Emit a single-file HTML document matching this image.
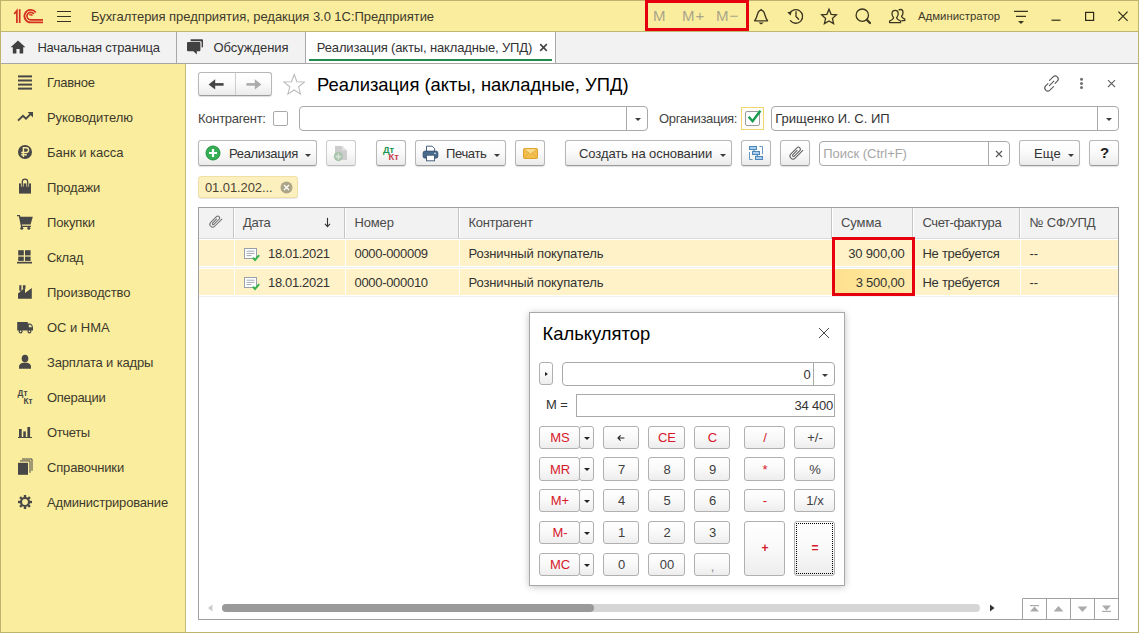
<!DOCTYPE html>
<html lang="ru">
<head>
<meta charset="utf-8">
<title>1С:Предприятие</title>
<style>
*{box-sizing:border-box;margin:0;padding:0}
html,body{width:1139px;height:633px;overflow:hidden;background:#fff}
body{font-family:"Liberation Sans",sans-serif;font-size:13px;color:#333;position:relative}
.abs{position:absolute}
.t{position:absolute;white-space:nowrap;line-height:1}
#frame{position:absolute;left:0;top:0;width:1139px;height:633px;background:#FBED9E}
#topbar{position:absolute;left:0;top:0;width:1139px;height:32px;background:#FBED9E;border-top:1px solid #BDB36A;border-bottom:1px solid #C0B772}
#tabbar{position:absolute;left:0;top:32px;width:1138px;height:32px;background:#F2F2F2;border-bottom:1px solid #A6A6A6}
#sidebar{position:absolute;left:0;top:64px;width:186px;height:568px;background:#FBED9E;border-right:1px solid #C2B873}
#content{position:absolute;left:186px;top:64px;width:952px;height:568px;background:#fff}
.edgeL{position:absolute;left:0;top:0;width:1px;height:633px;background:#BDB36A}
.edgeR{position:absolute;left:1138px;top:0;width:1px;height:633px;background:#BDB36A}
.edgeB{position:absolute;left:0;top:632px;width:1139px;height:1px;background:#BDB36A}
/* tabs */
.tab{position:absolute;top:0;height:31px;border-right:1px solid #A8A8A8}
.tab .t{top:9px;font-size:13px;color:#333}
/* sidebar */
.sitem{position:absolute;left:47px;font-size:13px;color:#3d3a2c;white-space:nowrap;line-height:1;margin-top:1px}
.sicon{position:absolute;left:17px;width:16px;height:16px}
/* buttons */
.btn{position:absolute;height:26px;border:1px solid #B7B7B7;border-bottom-color:#9C9C9C;border-radius:3px;background:linear-gradient(#ffffff 0%,#fbfbfb 45%,#ebebeb 100%);box-shadow:0 1px 1px rgba(0,0,0,.13)}
.btn .t{top:6px;font-size:13px;color:#333}
.arr{position:absolute;width:0;height:0;margin-left:.5px;margin-top:.5px;border-left:3px solid transparent;border-right:3px solid transparent;border-top:3.4px solid #3c3c3c}
.inp{position:absolute;border:1px solid #A9A9A9;border-radius:4px;background:#fff}
.inp .div{position:absolute;top:0;bottom:0;width:1px;background:#A9A9A9}
/* table */
#tbl{position:absolute;left:198px;top:207px;width:921px;height:413px;border:1px solid #A0A0A0;background:#fff}
.th{position:absolute;top:0;height:31px;background:#F2F2F2}
.hsep{position:absolute;top:0;width:2px;height:31px;background:#fff;border-left:1px solid #C4C4C4}
.row{position:absolute;left:0;width:919px;height:26px;background:#FFF2C8}
.csep{position:absolute;top:0;width:1px;height:26px;background:#fff}
.cell{position:absolute;top:7px;font-size:13px;color:#333;white-space:nowrap;line-height:1}
/* calculator */
#calc{position:absolute;left:529px;top:312px;width:316px;height:274px;background:#fff;border:1px solid #A8A8A8;box-shadow:0 1px 7px rgba(0,0,0,.24)}
.cb{position:absolute;height:23px;border:1px solid #B0B0B0;border-radius:3px;background:linear-gradient(#ffffff 0%,#f9f9f9 50%,#ededed 100%);text-align:center;font-size:13px;line-height:21px;color:#404040;padding-left:1px}
.cb.r{color:#D6182A}
</style>
</head>
<body>
<div id="frame"></div>
<div id="topbar">
<svg class="abs" style="left:0;top:-1px" width="1139" height="32" viewBox="0 0 1139 32" fill="none">
<!-- 1C logo -->
<g stroke="#D3301F" stroke-width="1.7" fill="none" stroke-linejoin="miter">
<path d="M14.2 14L16.9 10.6L16.9 23"/>
<path d="M19.7 9.2L19.7 23"/>
<path d="M35.8 12.4A6.3 6.3 0 1 0 30.8 22.4L43 22.4"/>
<path d="M33.8 13.9A3.8 3.8 0 1 0 30.8 19.9L43 19.9"/>
<path d="M32.3 15.7A1.6 1.6 0 0 0 29.4 15.4" stroke-width="1.3"/>
</g>
<!-- hamburger -->
<g stroke="#3a3520" stroke-width="1.1">
<path d="M57 11.5H71M57 16.5H71M57 21.5H71"/>
</g>
<!-- bell -->
<g stroke="#3a3520" stroke-width="1.3" stroke-linejoin="round" stroke-linecap="round">
<path d="M754.6 20.8 H767.6 C764.6 18 765.6 12.4 762.6 10.6 Q761.1 9.6 759.6 10.6 C756.6 12.4 757.6 18 754.6 20.8 Z"/>
<path d="M761.1 9.4V10"/>
</g>
<path d="M758.3 22.6H763.9L761.1 24.6Z" fill="#3a3520"/>
<!-- history -->
<g stroke="#3a3520" stroke-width="1.3" stroke-linecap="round">
<path d="M789.6 13.6 A6.8 6.8 0 1 1 790.4 20.6"/>
<path d="M796 11.6V16.4L798.6 19.2"/>
</g>
<path d="M787.2 12.2L791.6 11.4L790.6 15.6Z" fill="#3a3520"/>
<!-- star -->
<path d="M829 9.3L831.1 14.3L836.4 14.8L832.4 18.4L833.6 23.6L829 20.9L824.4 23.6L825.6 18.4L821.6 14.8L826.9 14.3Z" stroke="#3a3520" stroke-width="1.3" stroke-linejoin="miter"/>
<!-- search -->
<circle cx="862.3" cy="15.2" r="6.2" stroke="#3a3520" stroke-width="1.3"/>
<path d="M866.8 19.8L870 23" stroke="#3a3520" stroke-width="2.2" stroke-linecap="round"/>
<!-- users -->
<g stroke="#3a3520" stroke-width="1.3" stroke-linejoin="round">
<path d="M898.6 10.4 Q899.4 9.4 900.6 9.4 Q903 9.6 903 12.6 Q903 15 901.6 16.2 Q901.4 17.6 904.8 19.2 V20.6 H901.4"/>
<path d="M889.6 22.6 V21 Q893.6 19.4 893.6 17.6 Q892 16.2 892 13.6 Q892 10.4 895.1 10.4 Q898.2 10.4 898.2 13.6 Q898.2 16.2 896.6 17.6 Q896.6 19.4 900.6 21 V22.6 Z"/>
</g>
<!-- menu lines -->
<g stroke="#3a3520" stroke-width="1.2"><path d="M1014 11.4H1028M1016 16.4H1026"/></g>
<path d="M1018 21H1024L1021 24Z" fill="#3a3520"/>
<!-- window controls -->
<g stroke="#2e2a18" stroke-width="1.2"><path d="M1051.5 20.2H1060.5"/><rect x="1085.6" y="12.4" width="8" height="8"/><path d="M1118.4 11.6L1127.6 20.8M1127.6 11.6L1118.4 20.8"/></g>
</svg>
<div class="t" style="left:91px;top:9px;font-size:13px;color:#3d3a2c;letter-spacing:-0.05px">Бухгалтерия предприятия, редакция 3.0 1С:Предприятие</div>
<div class="t" style="left:653px;top:7px;font-size:15px;color:#A9A58A">M</div>
<div class="t" style="left:682px;top:7px;font-size:15px;color:#A9A58A;letter-spacing:1px">M+</div>
<div class="t" style="left:716px;top:7px;font-size:15px;color:#A9A58A;letter-spacing:1px">M−</div>
<div class="abs" style="left:645px;top:-1px;width:104px;height:31px;border:3px solid #E6000E"></div>
<div class="t" style="left:918px;top:10px;font-size:11.4px;color:#3d3a2c">Администратор</div>
</div>
<div id="tabbar">
<div class="tab" style="left:0;width:177px">
<svg class="abs" style="left:10px;top:8px" width="16" height="14" viewBox="0 0 16 14"><path d="M8 0.6L0.6 7.2H2.8V13.4H6.4V9H9.6V13.4H13.2V7.2H15.4Z" fill="#3f3f3f"/></svg>
<div class="t" style="letter-spacing:-0.19px;left:37.4px">Начальная страница</div></div>
<div class="tab" style="left:177px;width:129px">
<svg class="abs" style="left:8px;top:5px" width="20" height="20" viewBox="185 37 20 20"><path d="M190.6 39.2H202Q203 39.2 203 40.2V46.8Q203 47.6 202 47.6H201.6V42.4Q201.6 41.2 200.4 41.2H190.6Z" fill="#414141"/><path d="M188 42H199.4Q200.4 42 200.4 43V50.2Q200.4 51.2 199.4 51.2H196.8V54.6L193.4 51.2H188Q187 51.2 187 50.2V43Q187 42 188 42Z" fill="#414141"/></svg>
<div class="t" style="letter-spacing:-0.05px;left:36.5px">Обсуждения</div></div>
<div class="tab" style="left:306px;width:250px;background:#fff;height:31px">
<div class="t" style="left:10.8px;color:#333;letter-spacing:-0.15px">Реализация (акты, накладные, УПД)</div>
<svg class="abs" style="left:233px;top:11px" width="9" height="9" viewBox="0 0 9 9"><path d="M1.2 1.2L7.8 7.8M7.8 1.2L1.2 7.8" stroke="#484848" stroke-width="1.7"/></svg>
<div class="abs" style="left:3px;top:27px;width:243px;height:2px;background:#1F8B4D"></div>
</div>
</div>
<div id="sidebar"><svg class="abs" style="left:0;top:0" width="186" height="567" viewBox="0 64 186 567">
<g fill="#474747">
<rect x="18" y="75.4" width="14" height="2"/><rect x="18" y="79.5" width="14" height="2"/><rect x="18" y="83.6" width="14" height="2"/><rect x="18" y="87.6" width="14" height="2"/>
</g>
<path d="M18 120.6L23 115.8L26 118.6L31 113.6" fill="none" stroke="#474747" stroke-width="1.9" stroke-linejoin="miter"/>
<path d="M27.6 112H33V117.4Z" fill="#474747"/>
<circle cx="25" cy="152" r="7" fill="#474747"/>
<g stroke="#FBED9E" stroke-width="1.45" fill="none"><path d="M23.4 157V147.7H26.2A2.4 2.4 0 0 1 26.2 152.5H21.2"/><path d="M21.2 154.8H26.8"/></g>
<path d="M19 183.4H31V193.6H19Z" fill="#474747"/>
<path d="M22.3 186.6V181.8A2.7 2.7 0 0 1 27.7 181.8V186.6" fill="none" stroke="#FBED9E" stroke-width="2.7"/><path d="M22.3 186.4V181.8A2.7 2.7 0 0 1 27.7 181.8V186.4" fill="none" stroke="#474747" stroke-width="1.3"/><path d="M19 183.4H20.8M29.2 183.4H31" stroke="#474747" stroke-width="0.01"/>
<path d="M22.3 184V186M27.7 184V186" stroke="#FBED9E" stroke-width="0.01"/>
<path d="M19.4 216.8H32.8L30.6 224.4H21.2Z" fill="#474747"/>
<path d="M17 215.6H19.4L21.6 226.4H31" fill="none" stroke="#474747" stroke-width="1.3"/>
<circle cx="21.8" cy="228.2" r="1.5" fill="#474747"/><circle cx="28.8" cy="228.2" r="1.5" fill="#474747"/>
<g fill="#474747"><rect x="18.2" y="250.2" width="5.6" height="5.2"/><rect x="25" y="250.2" width="5.6" height="5.2"/><rect x="18.2" y="256.6" width="5.6" height="4.3"/><rect x="25" y="256.6" width="5.6" height="4.3"/><rect x="17" y="261.8" width="15" height="1.7"/></g>
<g fill="#474747"><path d="M18 298.8V293.6L25 287.6V293L31.8 288V298.8Z"/><rect x="19.3" y="285.2" width="2.1" height="5.6"/><rect x="22.9" y="285.2" width="2.6" height="3.6"/></g>
<g fill="#474747"><path d="M17.2 322H27.8V323.6H30.4Q33 324.6 33 327.6V330.6H17.2Z"/><circle cx="20.6" cy="331.4" r="2"/><circle cx="29.4" cy="331.4" r="2"/></g>
<path d="M28.8 324.8H30.2Q31.8 325.4 31.9 327.2H28.8Z" fill="#EFE8B0"/>
<circle cx="20.6" cy="331.4" r="0.8" fill="#FBED9E"/><circle cx="29.4" cy="331.4" r="0.8" fill="#FBED9E"/>
<g fill="#474747"><ellipse cx="25" cy="358.6" rx="3.3" ry="3.8"/><path d="M19 368.8V366.4Q19 363.8 23 362.8H27Q31 363.8 31 366.4V368.8Z"/></g>
<g font-family="Liberation Sans" font-weight="bold" fill="#474747" font-size="8.2"><text x="17.6" y="396.2">Дт</text><text x="23.6" y="404">Кт</text></g>
<g fill="#474747"><rect x="19" y="429" width="2.7" height="8"/><rect x="23.3" y="431.4" width="2.5" height="5.6"/><rect x="27.4" y="427" width="2.7" height="10"/><rect x="18" y="437" width="14" height="1"/></g>
<rect x="18" y="462.8" width="10" height="12" fill="#474747"/>
<path d="M20 460.9H30V472.8M22 459H32V470.8" fill="none" stroke="#474747" stroke-width="1"/>
<path d="M29.60 502.00L32.00 502.00" stroke="#474747" stroke-width="2.4"/><path d="M28.25 505.25L29.95 506.95" stroke="#474747" stroke-width="2.4"/><path d="M25.00 506.60L25.00 509.00" stroke="#474747" stroke-width="2.4"/><path d="M21.75 505.25L20.05 506.95" stroke="#474747" stroke-width="2.4"/><path d="M20.40 502.00L18.00 502.00" stroke="#474747" stroke-width="2.4"/><path d="M21.75 498.75L20.05 497.05" stroke="#474747" stroke-width="2.4"/><path d="M25.00 497.40L25.00 495.00" stroke="#474747" stroke-width="2.4"/><path d="M28.25 498.75L29.95 497.05" stroke="#474747" stroke-width="2.4"/><circle cx="25" cy="502" r="4" fill="none" stroke="#474747" stroke-width="2.2"/>
</svg><div class="sitem" style="letter-spacing:-0.3px;top:11px">Главное</div><div class="sitem" style="letter-spacing:-0.06px;top:46px">Руководителю</div><div class="sitem" style="letter-spacing:0px;top:81px">Банк и касса</div><div class="sitem" style="letter-spacing:-0.17px;top:116px">Продажи</div><div class="sitem" style="letter-spacing:-0.16px;top:151px">Покупки</div><div class="sitem" style="letter-spacing:-0.3px;top:186px">Склад</div><div class="sitem" style="letter-spacing:-0.12px;top:221px">Производство</div><div class="sitem" style="letter-spacing:-0.04px;top:256px">ОС и НМА</div><div class="sitem" style="letter-spacing:-0.16px;top:291px">Зарплата и кадры</div><div class="sitem" style="letter-spacing:-0.3px;top:326px">Операции</div><div class="sitem" style="letter-spacing:-0.35px;top:361px">Отчеты</div><div class="sitem" style="letter-spacing:-0.16px;top:396px">Справочники</div><div class="sitem" style="letter-spacing:-0.175px;top:431px">Администрирование</div></div>
<div id="content"><div class="abs" style="left:-186px;top:-64px;width:1139px;height:633px">
<!-- nav buttons -->
<div class="btn" style="left:198px;top:72px;width:74px;height:24px;border-radius:3px"></div>
<div class="abs" style="left:235px;top:73px;width:1px;height:22px;background:#CDCDCD"></div>
<svg class="abs" style="left:198px;top:72px" width="74" height="24" viewBox="0 0 74 24">
<path d="M14 12.4H25.6" stroke="#444" stroke-width="2.6"/><path d="M10.6 12.4L17.2 7.2V17.6Z" fill="#444"/>
<path d="M48.4 12.4H60" stroke="#ABABAB" stroke-width="2.6"/><path d="M63.4 12.4L56.8 7.2V17.6Z" fill="#ABABAB"/>
</svg>
<svg class="abs" style="left:283px;top:73.4px" width="22.4" height="22.4" viewBox="0 0 24 24"><path d="M12 1.6L14.9 9.3L23 9.7L16.7 14.8L18.8 22.6L12 18.2L5.2 22.6L7.3 14.8L1 9.7L9.1 9.3Z" fill="#fff" stroke="#B9B9B9" stroke-width="1.1" stroke-linejoin="miter"/></svg>
<div class="t" style="left:317px;top:76px;font-size:18.4px;color:#000">Реализация (акты, накладные, УПД)</div>
<!-- link, dots, close -->
<svg class="abs" style="left:1040px;top:72px" width="84" height="24" viewBox="1040 72 84 24" fill="none">
<g stroke="#5c5c5c" stroke-width="1.15" fill="none" stroke-linecap="round"><g transform="rotate(-45 1054.2 80.0)"><path d="M1050.6 77.0H1055.6A3 3 0 0 1 1055.6 83.0H1052.4"/></g><g transform="rotate(-45 1048.8 87.0)"><path d="M1052.4 90.0H1047.4A3 3 0 0 1 1047.4 84.0H1050.6"/></g><path d="M1049.4 85.6L1053.8 81.2"/></g>
<circle cx="1081.5" cy="79.2" r="1.5" fill="#6e6e6e"/><circle cx="1081.5" cy="83.4" r="1.5" fill="#6e6e6e"/><circle cx="1081.5" cy="87.6" r="1.5" fill="#6e6e6e"/>
<path d="M1108 80.2L1115 87M1115 80.2L1108 87" stroke="#606060" stroke-width="1.05"/>
</svg>
<!-- form row -->
<div class="t" style="left:198px;top:112px;font-size:13px;letter-spacing:-0.285px;color:#444">Контрагент:</div>
<div class="abs" style="left:273px;top:111px;width:15px;height:15px;border:1px solid #A9A9A9;border-radius:2px;background:#fff"></div>
<div class="inp" style="left:299px;top:106px;width:349px;height:25px"><div class="div" style="left:326px"></div><div class="arr" style="left:334px;top:10px"></div></div>
<div class="t" style="left:659px;top:112px;font-size:13px;letter-spacing:-0.33px;color:#444">Организация:</div>
<div class="abs" style="left:741px;top:107px;width:23px;height:23px;border:1px solid #EFD670;background:#FFFEF6"></div>
<div class="abs" style="left:745px;top:111px;width:15px;height:15px;border:1px solid #9C9C9C;border-radius:2px;background:#fff"></div>
<svg class="abs" style="left:744.6px;top:106px" width="20" height="20" viewBox="0 0 20 20"><path d="M3.6 10.8L7.6 15.2L15.4 4.8" fill="none" stroke="#169A4B" stroke-width="2.4" stroke-linejoin="miter"/></svg>
<div class="inp" style="left:771px;top:106px;width:348px;height:25px"><div class="div" style="left:325px"></div><div class="arr" style="left:333px;top:10px"></div>
<div class="t" style="left:3.3px;top:5px;font-size:13px;color:#333">Грищенко И. С. ИП</div></div>
<!-- toolbar -->
<div class="btn" style="left:198px;top:140px;width:119px;height:26px"><div class="t" style="left:30px;letter-spacing:-0.335px">Реализация</div><div class="arr" style="left:105px;top:12px"></div>
<svg class="abs" style="left:6px;top:4px" width="16" height="16" viewBox="0 0 16 16"><circle cx="8" cy="8" r="7" fill="#35AE55" stroke="#23913F" stroke-width="1"/><path d="M8 4V12M4 8H12" stroke="#fff" stroke-width="2.2"/></svg></div>
<div class="btn" style="left:326px;top:140px;width:30px;height:26px;border-color:#CDCDCD;border-bottom-color:#BDBDBD;box-shadow:0 1px 1px rgba(0,0,0,.07)">
<svg class="abs" style="left:5px;top:4px" width="18" height="18" viewBox="0 0 18 18"><path d="M3 1H10L15 5.5V15H3Z" fill="#CDCDCD"/><path d="M10 1V5.5H15" fill="#E2E2E2"/><circle cx="6.4" cy="11.6" r="4.6" fill="#A9C3AC"/><path d="M6.4 8.8V14.4M3.6 11.6H9.2" stroke="#D5E3D6" stroke-width="1.6"/></svg></div>
<div class="btn" style="left:376px;top:140px;width:30px;height:26px">
<svg class="abs" style="left:0;top:0" width="28" height="23" viewBox="0 0 28 23" font-family="Liberation Sans" font-weight="bold"><text x="6" y="11.8" font-size="9.2" fill="#1E9650">Дт</text><text x="11.6" y="19" font-size="9.4" fill="#C9414F">Кт</text></svg></div>
<div class="btn" style="left:415px;top:140px;width:91px;height:26px"><div class="t" style="left:30px;letter-spacing:-0.35px">Печать</div><div class="arr" style="left:77px;top:12px"></div>
<svg class="abs" style="left:6px;top:4px" width="17" height="17" viewBox="0 0 17 17"><path d="M4.5 1.2H10.2L12.6 3.6V7H4.5Z" fill="#fff" stroke="#49617C" stroke-width="1"/><rect x="1.2" y="6.2" width="14.6" height="6.8" rx="1.6" fill="#4A6A8C" stroke="#33506E" stroke-width="1"/><rect x="4.5" y="10.2" width="8" height="5.6" fill="#fff" stroke="#49617C" stroke-width="1"/><rect x="12" y="7.8" width="2" height="1" fill="#DDE8F3"/></svg></div>
<div class="btn" style="left:515px;top:140px;width:30px;height:26px">
<svg class="abs" style="left:7px;top:7px" width="15" height="11" viewBox="0 0 15 11"><rect x="0.5" y="0.5" width="14" height="10" rx="1" fill="#F3BE4E" stroke="#DDA22C"/><path d="M1 1L7.5 6.4L14 1" fill="#F9D98A" stroke="#E2A93A" stroke-width="0.9"/><path d="M1 10L5.6 5.4M14 10L9.4 5.4" stroke="#E2A93A" stroke-width="0.8"/></svg></div>
<div class="btn" style="left:565px;top:140px;width:167px;height:26px"><div class="t" style="left:13px;letter-spacing:-0.085px">Создать на основании</div><div class="arr" style="left:153px;top:12px"></div></div>
<div class="btn" style="left:741px;top:140px;width:30px;height:26px">
<svg class="abs" style="left:5px;top:3px" width="20" height="20" viewBox="747 144 20 20" fill="none"><path d="M759.4 146.5H762.5V154M749.5 152V159.5H752.6" stroke="#6A97BF" stroke-width="1"/><path d="M754 150V151.5M757.3 155V156.5" stroke="#4F86B8" stroke-width="1.2"/><rect x="749.5" y="146.5" width="7" height="3" fill="#A9CFF0" stroke="#4F86B8" stroke-width="1"/><rect x="752.5" y="151.5" width="7" height="3" fill="#A9CFF0" stroke="#4F86B8" stroke-width="1"/><rect x="755.5" y="156.5" width="7" height="3" fill="#A9CFF0" stroke="#4F86B8" stroke-width="1"/></svg></div>
<div class="btn" style="left:780px;top:140px;width:30px;height:26px">
<svg class="abs" style="left:7px;top:4px" width="16" height="16" viewBox="-8 -8 16 16" fill="none"><g transform="rotate(45)"><path d="M3 -6.6V4.2A3 3 0 0 1 -3 4.2V-4.4A2 2 0 0 1 1 -4.4V3.4A1 1 0 0 1 -1 3.4V-2.6" stroke="#5e5e5e" stroke-width="1.05" stroke-linecap="round"/></g></svg></div>
<div class="inp" style="left:819px;top:141px;width:191px;height:25px"><div class="div" style="left:168px"></div>
<div class="t" style="letter-spacing:-0.03px;left:3.3px;top:5px;font-size:13px;color:#A6A6A6">Поиск (Ctrl+F)</div>
<svg class="abs" style="left:175px;top:8px" width="8" height="8" viewBox="0 0 8 8"><path d="M1 1L7 7M7 1L1 7" stroke="#555" stroke-width="1.1"/></svg></div>
<div class="btn" style="left:1019px;top:140px;width:61px;height:26px"><div class="t" style="left:14px;font-size:13px;top:6px;letter-spacing:0.1px">Еще</div><div class="arr" style="left:47px;top:12px"></div></div>
<div class="btn" style="left:1089px;top:140px;width:30px;height:26px"><div class="t" style="left:10px;top:4px;font-size:15px;font-weight:bold;color:#222">?</div></div>
<!-- chip -->
<div class="abs" style="left:198px;top:176px;width:100px;height:22px;background:#FDF0BF;border:1px solid #F1E0A6;border-radius:3px;box-shadow:0 1px 1px rgba(0,0,0,.10)">
<div class="t" style="left:6px;top:4px;font-size:13px;color:#4a4332;letter-spacing:-0.105px">01.01.202...</div>
<svg class="abs" style="left:81px;top:4px" width="13" height="13" viewBox="0 0 13 13"><circle cx="6.5" cy="6.5" r="6" fill="#ACA587"/><path d="M4 4L9 9M9 4L4 9" stroke="#fff" stroke-width="1.3"/></svg></div>
<div id="tbl"><div class="th" style="left:0;width:919px"></div><div class="abs" style="left:0;top:30px;width:919px;height:1px;background:#DADADA"></div><div class="hsep" style="left:34px;height:30px"></div><div class="hsep" style="left:145px;height:30px"></div><div class="hsep" style="left:259px;height:30px"></div><div class="hsep" style="left:632px;height:30px"></div><div class="hsep" style="left:713px;height:30px"></div><div class="hsep" style="left:820px;height:30px"></div><svg class="abs" style="left:9px;top:6px" width="15" height="15" viewBox="-8 -8 16 16" fill="none"><g transform="rotate(45)"><path d="M3 -6.6V4.2A3 3 0 0 1 -3 4.2V-4.4A2 2 0 0 1 1 -4.4V3.4A1 1 0 0 1 -1 3.4V-2.6" stroke="#6b6b6b" stroke-width="1.05" stroke-linecap="round"/></g></svg><div class="cell" style="left:44px;top:8px;color:#4a4a4a;letter-spacing:-0.32px">Дата</div><div class="cell" style="left:155.5px;top:8px;color:#4a4a4a;letter-spacing:-0.16px">Номер</div><div class="cell" style="left:269.5px;top:8px;color:#4a4a4a;letter-spacing:-0.31px">Контрагент</div><div class="cell" style="left:642px;top:8px;color:#4a4a4a;letter-spacing:-0.09px">Сумма</div><div class="cell" style="left:723.5px;top:8px;color:#4a4a4a;letter-spacing:-0.42px">Счет-фактура</div><div class="cell" style="left:830.4000000000001px;top:8px;color:#4a4a4a;letter-spacing:-0.08px">№ СФ/УПД</div><svg class="abs" style="left:124px;top:9px" width="9" height="11" viewBox="0 0 9 11"><path d="M4.5 0.8V9" stroke="#333" stroke-width="1.1"/><path d="M2 6.8L4.5 9.6L7 6.8" fill="none" stroke="#333" stroke-width="1.1"/></svg><div class="row" style="top:32px"><div class="csep" style="left:35px"></div><div class="csep" style="left:146px"></div><div class="csep" style="left:260px"></div><div class="csep" style="left:633px"></div><div class="csep" style="left:714px"></div><div class="csep" style="left:821px"></div><svg class="abs" style="left:45px;top:7.6px" width="17" height="14" viewBox="0 0 17 14"><rect x="0.5" y="0.5" width="12" height="10" fill="#fff" stroke="#98A1AA"/><path d="M2.5 3.2H10.5M2.5 5.4H10.5M2.5 7.6H7.5" stroke="#A3ABB3" stroke-width="1"/><path d="M8.8 9.6L11 12L15.2 7.2" fill="none" stroke="#35B34E" stroke-width="1.9"/></svg><div class="cell" style="left:69px;letter-spacing:-0.34px">18.01.2021</div><div class="cell" style="left:155.5px;letter-spacing:-0.31px">0000-000009</div><div class="cell" style="left:269.5px;letter-spacing:-0.12px">Розничный покупатель</div><div class="cell" style="right:213.5px;letter-spacing:-0.18px">30 900,00</div><div class="cell" style="left:723.5px;letter-spacing:-0.265px">Не требуется</div><div class="cell" style="left:830.4000000000001px">--</div></div><div class="abs" style="left:0;top:59px;width:919px;height:1px;background:#EFEFEF"></div><div class="row" style="top:61px"><div class="csep" style="left:35px"></div><div class="csep" style="left:146px"></div><div class="csep" style="left:260px"></div><div class="csep" style="left:633px"></div><div class="csep" style="left:714px"></div><div class="csep" style="left:821px"></div><div class="abs" style="left:634px;top:0;width:80px;height:26px;background:linear-gradient(95deg,#FFE18E 0%,#FFE69B 55%,#FFEBB0 100%)"></div><svg class="abs" style="left:45px;top:7.6px" width="17" height="14" viewBox="0 0 17 14"><rect x="0.5" y="0.5" width="12" height="10" fill="#fff" stroke="#98A1AA"/><path d="M2.5 3.2H10.5M2.5 5.4H10.5M2.5 7.6H7.5" stroke="#A3ABB3" stroke-width="1"/><path d="M8.8 9.6L11 12L15.2 7.2" fill="none" stroke="#35B34E" stroke-width="1.9"/></svg><div class="cell" style="left:69px;letter-spacing:-0.34px">18.01.2021</div><div class="cell" style="left:155.5px;letter-spacing:-0.31px">0000-000010</div><div class="cell" style="left:269.5px;letter-spacing:-0.12px">Розничный покупатель</div><div class="cell" style="right:213.5px;letter-spacing:-0.22px">3 500,00</div><div class="cell" style="left:723.5px;letter-spacing:-0.265px">Не требуется</div><div class="cell" style="left:830.4000000000001px">--</div></div><div class="abs" style="left:0;top:88px;width:919px;height:1px;background:#EFEFEF"></div><div class="abs" style="left:633px;top:29px;width:83px;height:59px;border:3px solid #E6000E"></div><svg class="abs" style="left:0;top:388px" width="919" height="24" viewBox="199 596 919 24">
<path d="M212.4 604.6V611.4L208 608Z" fill="#C9C9C9"/>
<rect x="222" y="604" width="758" height="8" rx="4" fill="#D6D6D6"/>
<rect x="222" y="604" width="372" height="8" rx="4" fill="#9A9A9A"/>
<path d="M990 604.4V611.6L994.6 608Z" fill="#333"/>
<g fill="none" stroke="#A0A0A0" stroke-width="1"><path d="M1022.5 619.5V598.5H1118.5"/><path d="M1046.5 598.5V619.5M1070.5 598.5V619.5M1094.5 598.5V619.5"/></g>
<g fill="#ABABAB"><rect x="1030" y="605" width="9" height="1.2"/><path d="M1030 611.6H1039L1034.5 606.6Z"/>
<path d="M1053.6 611.4H1063.4L1058.5 606Z"/>
<path d="M1077.6 606.6H1087.4L1082.5 612Z"/>
<path d="M1102 605.4H1111L1106.5 610.4Z"/><rect x="1102" y="610.8" width="9" height="1.2"/></g>
</svg></div>
<div id="calc"><div class="t" style="left:12.5px;top:12px;font-size:18.4px;color:#000">Калькулятор</div><svg class="abs" style="left:288px;top:14px" width="12" height="12" viewBox="0 0 12 12"><path d="M1 1L11 11M11 1L1 11" stroke="#484848" stroke-width="1"/></svg><div class="cb" style="left:9px;top:49px;width:14px;height:23px"><div class="abs" style="left:5px;top:8.5px;width:0;height:0;border-top:2.5px solid transparent;border-bottom:2.5px solid transparent;border-left:3px solid #222"></div></div><div class="inp" style="left:32px;top:49px;width:273px;height:24px"><div class="div" style="left:250px"></div><div class="arr" style="left:258px;top:10px"></div><div class="t" style="right:23.4px;top:5px;font-size:13px;color:#333">0</div></div><div class="t" style="left:16px;top:85px;font-size:13px;color:#333;letter-spacing:-0.1px">M =</div><div class="abs" style="left:46px;top:81px;width:259px;height:23px;border:1px solid #A9A9A9;background:#fff"><div class="t" style="right:1px;top:4px;font-size:13px;color:#333;letter-spacing:-0.19px">34 400</div></div><div class="cb r" style="left:9px;top:113px;width:41px">MS</div><div class="cb" style="left:49px;top:113px;width:15px"><div class="arr" style="left:3.5px;top:9px;border-top-color:#222"></div></div><div class="cb" style="left:73px;top:113px;width:36px"><svg class="abs" style="left:13px;top:7px" width="8" height="8" viewBox="0 0 8 8"><path d="M1 4H7.4M3.6 1.4L1 4L3.6 6.6" fill="none" stroke="#222" stroke-width="1.1"/></svg></div><div class="cb r" style="left:118px;top:113px;width:37px">CE</div><div class="cb r" style="left:164px;top:113px;width:36px">C</div><div class="cb r" style="left:214px;top:113px;width:41px">/</div><div class="cb" style="left:264px;top:113px;width:41px">+/-</div><div class="cb r" style="left:9px;top:144px;width:41px;height:24px;line-height:23px">MR</div><div class="cb" style="left:49px;top:144px;width:15px;height:24px;line-height:23px"><div class="arr" style="left:3.5px;top:9px;border-top-color:#222"></div></div><div class="cb" style="left:73px;top:144px;width:36px;height:24px;line-height:23px">7</div><div class="cb" style="left:118px;top:144px;width:37px;height:24px;line-height:23px">8</div><div class="cb" style="left:164px;top:144px;width:36px;height:24px;line-height:23px">9</div><div class="cb r" style="left:214px;top:144px;width:41px;height:24px;line-height:23px">*</div><div class="cb" style="left:264px;top:144px;width:41px;height:24px;line-height:23px">%</div><div class="cb r" style="left:9px;top:176px;width:41px">M+</div><div class="cb" style="left:49px;top:176px;width:15px"><div class="arr" style="left:3.5px;top:9px;border-top-color:#222"></div></div><div class="cb" style="left:73px;top:176px;width:36px">4</div><div class="cb" style="left:118px;top:176px;width:37px">5</div><div class="cb" style="left:164px;top:176px;width:36px">6</div><div class="cb r" style="left:214px;top:176px;width:41px">-</div><div class="cb" style="left:264px;top:176px;width:41px">1/x</div><div class="cb r" style="left:9px;top:208px;width:41px">M-</div><div class="cb" style="left:49px;top:208px;width:15px"><div class="arr" style="left:3.5px;top:9px;border-top-color:#222"></div></div><div class="cb" style="left:73px;top:208px;width:36px">1</div><div class="cb" style="left:118px;top:208px;width:37px">2</div><div class="cb" style="left:164px;top:208px;width:36px">3</div><div class="cb r" style="left:9px;top:240px;width:41px">MC</div><div class="cb" style="left:49px;top:240px;width:15px"><div class="arr" style="left:3.5px;top:9px;border-top-color:#222"></div></div><div class="cb" style="left:73px;top:240px;width:36px">0</div><div class="cb" style="left:118px;top:240px;width:37px">00</div><div class="cb" style="left:164px;top:240px;width:36px;color:#8a8a8a;font-size:13px;line-height:25px">,</div><div class="cb r" style="left:214px;top:208px;width:41px;height:55px;line-height:53px;font-weight:bold;font-size:12px">+</div><div class="cb r" style="left:264px;top:208px;width:41px;height:55px;line-height:53px;font-weight:bold;font-size:12px">=<div class="abs" style="left:1px;top:1px;right:1px;bottom:1px;border:1px dotted #000"></div></div></div>
</div></div>
<div class="edgeL"></div><div class="edgeR"></div><div class="edgeB"></div>
</body>
</html>
